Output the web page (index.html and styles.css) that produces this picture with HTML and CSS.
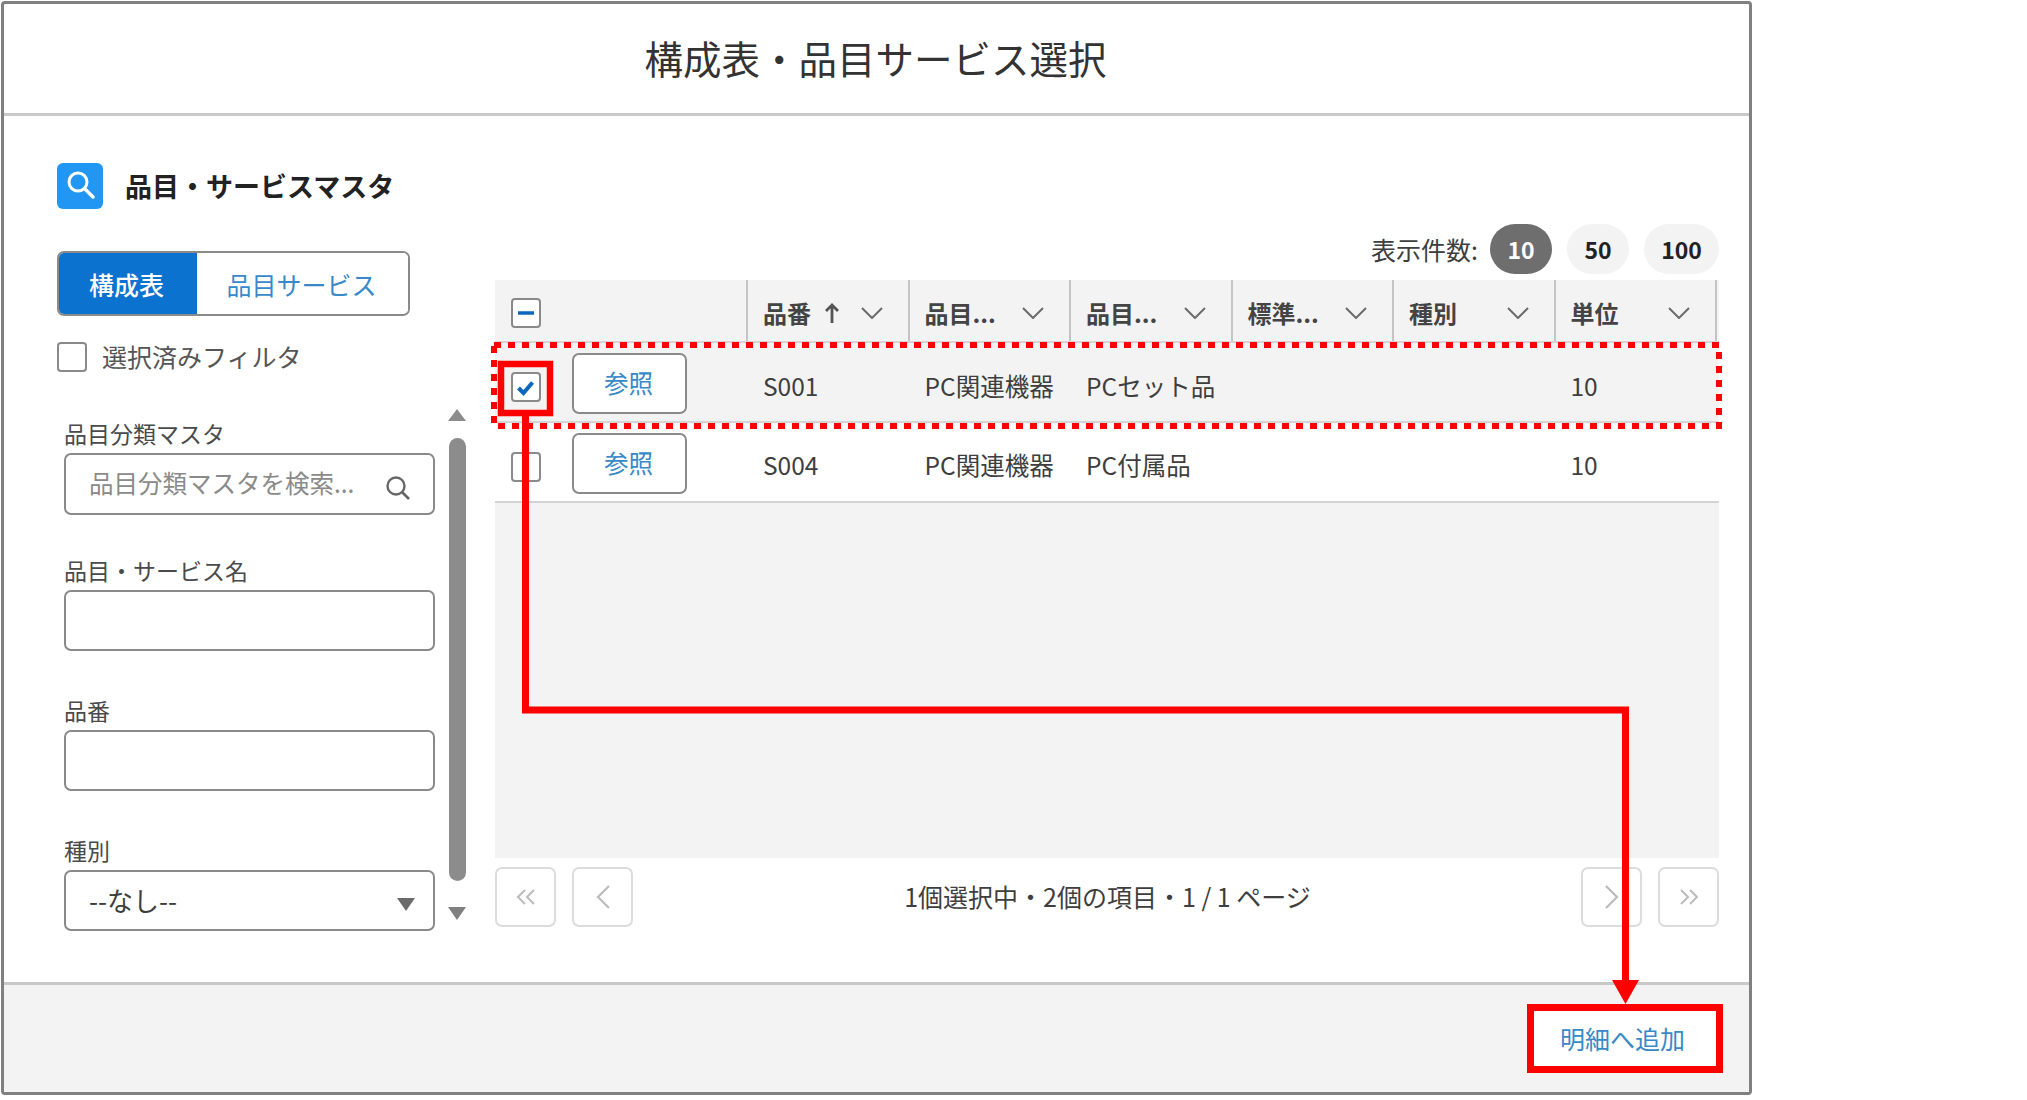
FILE: index.html
```html
<!DOCTYPE html>
<html lang="ja">
<head>
    <meta charset="UTF-8">
    <title>構成表・品目サービス選択</title>
    <link rel="stylesheet" href="styles.css">
</head>
<body>

<div class="page">
    <svg width="0" height="0" class="defs">
        <symbol id="chevron" viewBox="0 0 22 12">
            <path d="M1 1 L11 11 L21 1" fill="none" stroke="#6b6b6b" stroke-width="2"/>
        </symbol>
    </svg>

    <div class="dialog">
        <!-- Header -->
        <header class="dialog-head">
            <h1 class="dialog-title">構成表・品目サービス選択</h1>
        </header>

        <div class="dialog-main">
            <!-- Left filters -->
            <section class="filters">
                <div class="filters-title">
                    <span class="title-icon">
                        <svg width="46" height="46" viewBox="0 0 46 46">
                            <circle cx="21" cy="19" r="9" fill="none" stroke="#fff" stroke-width="3"/>
                            <path d="M28 26 L36 34" stroke="#fff" stroke-width="3.5" stroke-linecap="round"/>
                        </svg>
                    </span>
                    <h2 class="filters-heading">品目・サービスマスタ</h2>
                </div>

                <div class="toggle">
                    <button class="toggle-btn active">構成表</button>
                    <button class="toggle-btn">品目サービス</button>
                </div>

                <label class="check-row">
                    <span class="checkbox"></span>
                    <span class="check-text">選択済みフィルタ</span>
                </label>

                <div class="scroll-row">
                    <div class="fields">
                        <div class="field field-first">
                            <div class="field-label">品目分類マスタ</div>
                            <div class="input input-tall">
                                <span class="placeholder">品目分類マスタを検索...</span>
                                <svg width="26" height="26" viewBox="0 0 26 26">
                                    <circle cx="11" cy="11" r="8.5" fill="none" stroke="#666" stroke-width="2.4"/>
                                    <path d="M17 17 L24 24" stroke="#666" stroke-width="2.6"/>
                                </svg>
                            </div>
                        </div>
                        <div class="field">
                            <div class="field-label">品目・サービス名</div>
                            <div class="input"></div>
                        </div>
                        <div class="field">
                            <div class="field-label">品番</div>
                            <div class="input"></div>
                        </div>
                        <div class="field">
                            <div class="field-label">種別</div>
                            <div class="input select">
                                <span class="select-value">--なし--</span>
                                <span class="arrow-down"></span>
                            </div>
                        </div>
                    </div>
                    <div class="scrollbar">
                        <span class="arrow-up"></span>
                        <span class="thumb"></span>
                        <span class="arrow-down"></span>
                    </div>
                </div>
            </section>

            <!-- Right table -->
            <section class="results">
                <div class="page-size">
                    <span class="page-size-label">表示件数:</span>
                    <span class="pill pill-on">10</span>
                    <span class="pill">50</span>
                    <span class="pill pill-wide">100</span>
                </div>

                <div class="table">
                    <div class="row row-head">
                        <div class="cell cell-check">
                            <span class="checkbox checkbox-small">
                                <svg width="26" height="26" viewBox="0 0 26 26"><path d="M5 13 H21" stroke="#0b66bd" stroke-width="3.5"/></svg>
                            </span>
                        </div>
                        <div class="cell">品番
                            <svg class="sort-arrow" width="14" height="20" viewBox="0 0 14 20"><path d="M7 20 V2 M1 8 L7 2 L13 8" fill="none" stroke="#555" stroke-width="2.8"/></svg>
                            <svg class="chevron" width="22" height="12"><use href="#chevron"/></svg>
                        </div>
                        <div class="cell">品目...<svg class="chevron" width="22" height="12"><use href="#chevron"/></svg></div>
                        <div class="cell">品目...<svg class="chevron" width="22" height="12"><use href="#chevron"/></svg></div>
                        <div class="cell">標準...<svg class="chevron" width="22" height="12"><use href="#chevron"/></svg></div>
                        <div class="cell">種別<svg class="chevron" width="22" height="12"><use href="#chevron"/></svg></div>
                        <div class="cell">単位<svg class="chevron" width="22" height="12"><use href="#chevron"/></svg></div>
                    </div>

                    <div class="row row-selected">
                        <div class="cell cell-check">
                            <span class="checkbox checkbox-small">
                                <svg width="26" height="26" viewBox="0 0 26 26"><path d="M5.5 14 L10.5 19 L19.5 8.5" fill="none" stroke="#0b66bd" stroke-width="4"/></svg>
                            </span>
                            <button class="ref-btn">参照</button>
                        </div>
                        <div class="cell">S001</div>
                        <div class="cell">PC関連機器</div>
                        <div class="cell">PCセット品</div>
                        <div class="cell"></div>
                        <div class="cell"></div>
                        <div class="cell">10</div>
                    </div>

                    <div class="row">
                        <div class="cell cell-check">
                            <span class="checkbox checkbox-small"></span>
                            <button class="ref-btn">参照</button>
                        </div>
                        <div class="cell">S004</div>
                        <div class="cell">PC関連機器</div>
                        <div class="cell">PC付属品</div>
                        <div class="cell"></div>
                        <div class="cell"></div>
                        <div class="cell">10</div>
                    </div>
                </div>

                <div class="pager">
                    <span class="pager-btn">
                        <svg width="20" height="16" viewBox="0 0 20 16"><path d="M9 1 L2 8 L9 15 M18 1 L11 8 L18 15" fill="none" stroke="#bbb" stroke-width="2"/></svg>
                    </span>
                    <span class="pager-btn">
                        <svg width="14" height="24" viewBox="0 0 14 24"><path d="M13 1 L2 12 L13 23" fill="none" stroke="#bbb" stroke-width="2.2"/></svg>
                    </span>
                    <span class="pager-info">1個選択中・2個の項目・1 / 1 ページ</span>
                    <span class="pager-btn">
                        <svg width="14" height="24" viewBox="0 0 14 24"><path d="M1 1 L12 12 L1 23" fill="none" stroke="#bbb" stroke-width="2.2"/></svg>
                    </span>
                    <span class="pager-btn">
                        <svg width="20" height="16" viewBox="0 0 20 16"><path d="M2 1 L9 8 L2 15 M11 1 L18 8 L11 15" fill="none" stroke="#bbb" stroke-width="2"/></svg>
                    </span>
                </div>
            </section>
        </div>

        <!-- Footer -->
        <footer class="dialog-foot">
            <button class="add-btn">明細へ追加</button>
        </footer>
    </div>

    <!-- Red annotations over the screenshot -->
    <svg class="marks" width="2027" height="1100" viewBox="0 0 2027 1100">
        <rect x="494" y="345" width="1225" height="81" fill="none" stroke="#ff0000" stroke-width="6" stroke-dasharray="7 7"/>
        <rect x="501" y="364" width="49" height="49" fill="none" stroke="#ff0000" stroke-width="6.5"/>
        <path d="M525.5 416 V710 H1625.5 V985" fill="none" stroke="#ff0000" stroke-width="7"/>
        <polygon points="1612,980 1639,980 1625.5,1004" fill="#ff0000"/>
        <rect x="1530.5" y="1007.5" width="189" height="62" fill="none" stroke="#ff0000" stroke-width="7"/>
    </svg>
</div>

</body>
</html>
```

FILE: styles.css
```css
/* General styling */
body {
    margin: 0;
    background-color: #ffffff;
    color: #3e3e3e;
    font-family: "Noto Sans CJK JP", "Noto Sans", sans-serif;
    font-size: 24.5px;
    line-height: 30px;
}

button {
    font-family: inherit;
    cursor: pointer;
}

.page {
    position: relative;
    width: 2027px;
    height: 1100px;
    overflow: hidden;
}

.defs {
    position: absolute;
}

.marks {
    position: absolute;
    left: 0;
    top: 0;
    pointer-events: none;
}

/* Dialog frame */
.dialog {
    box-sizing: border-box;
    width: 1751px;
    height: 1094px;
    margin: 1px 0 0 1px;
    border: 3px solid #808080;
    border-radius: 4px;
    display: flex;
    flex-direction: column;
}

.dialog-head {
    height: 109px;
    border-bottom: 3px solid #c9c9c9;
    display: flex;
    align-items: center;
    justify-content: center;
}

.dialog-title {
    margin: -3px 2px 0 0;
    font-size: 38.5px;
    line-height: 50px;
    font-weight: 400;
    color: #333;
}

.dialog-main {
    flex: 1;
    display: flex;
    gap: 29px;
    padding: 47px 30px 0 53px;
}

.dialog-foot {
    height: 107px;
    border-top: 3px solid #c9c9c9;
    background: #f3f3f3;
    display: flex;
    align-items: center;
    justify-content: flex-end;
    padding-right: 33px;
}

.add-btn {
    width: 182px;
    height: 55px;
    border: 0;
    background: #fff;
    color: #3889c8;
    font-size: 25px;
    padding: 0 5px 2px 0;
}

/* Left filters */
.filters {
    width: 409px;
}

.filters-title {
    display: flex;
    align-items: center;
    gap: 22px;
}

.title-icon {
    width: 46px;
    height: 46px;
    border-radius: 6px;
    background: #2196f3;
}

.filters-heading {
    margin: 0;
    font-size: 27px;
    font-weight: 700;
    color: #222;
}

.toggle {
    box-sizing: border-box;
    width: 353px;
    height: 65px;
    margin-top: 42px;
    border: 2px solid #8a8a8a;
    border-radius: 7px;
    overflow: hidden;
    display: flex;
}

.toggle-btn {
    flex: 1;
    border: 0;
    background: #fff;
    color: #3889c8;
    font-size: 25px;
    padding: 0 2px 0 0;
}

.toggle-btn.active {
    flex: 0 0 138px;
    background: #0b72cf;
    color: #fff;
    font-weight: 500;
    padding-right: 3px;
}

.check-row {
    display: flex;
    align-items: center;
    gap: 15px;
    margin-top: 26px;
    font-size: 25px;
    color: #555;
}

.check-text {
    margin-top: -2px;
}

.checkbox {
    box-sizing: border-box;
    flex: none;
    width: 30px;
    height: 30px;
    border: 2px solid #8a8a8a;
    border-radius: 4px;
    background: #fff;
    display: block;
}

.scroll-row {
    display: flex;
    gap: 13px;
    margin-top: 36px;
    height: 520px;
}

.fields {
    width: 371px;
    margin-left: 7px;
    padding-top: 12px;
}

.field {
    margin-bottom: 46px;
}

.field-first {
    margin-bottom: 42px;
}

.field-label {
    height: 30px;
    margin-top: -2px;
    margin-bottom: 5px;
    font-size: 23px;
    color: #4a4a4a;
}

.input {
    box-sizing: border-box;
    height: 61px;
    border: 2px solid #8a8a8a;
    border-radius: 7px;
    background: #fff;
    display: flex;
    align-items: center;
    justify-content: space-between;
    padding: 0 22px;
}

.input-tall {
    height: 62px;
}

.input-tall svg {
    margin-top: 7px;
}

.placeholder {
    color: #8a8a8a;
    font-size: 24.5px;
    margin-top: -3px;
    margin-left: 1px;
}

.select {
    padding-right: 18px;
}

.select-value {
    font-size: 26px;
    margin-top: -2px;
    margin-left: 1px;
}

.select .arrow-down {
    border-top-color: #6b6b6b;
    margin-top: 7px;
}

/* Scrollbar */
.scrollbar {
    width: 18px;
    display: flex;
    flex-direction: column;
    align-items: center;
}

.thumb {
    width: 17px;
    height: 443px;
    margin: 17px 0 26px;
    border-radius: 9px;
    background: #8c8c8c;
}

.arrow-up,
.arrow-down {
    width: 0;
    height: 0;
    border-left: 9px solid transparent;
    border-right: 9px solid transparent;
}

.arrow-up {
    border-bottom: 12px solid #8c8c8c;
    margin-top: 1px;
}

.arrow-down {
    border-top: 13px solid #808080;
}

/* Results */
.results {
    flex: 1;
    margin-top: 61px;
}

.page-size {
    height: 50px;
    display: flex;
    align-items: center;
    justify-content: flex-end;
    gap: 15px;
}

.page-size-label {
    margin-right: -3px;
    font-size: 25px;
}

.pill {
    width: 62px;
    height: 50px;
    border-radius: 25px;
    background: #f3f3f3;
    color: #222;
    font-size: 23px;
    font-weight: 700;
    display: flex;
    align-items: center;
    justify-content: center;
}

.pill-on {
    background: #6e6e6e;
    color: #fff;
}

.pill-wide {
    width: 75px;
}

.table {
    height: 578px;
    margin-top: 6px;
    background: #f3f3f3;
}

.row {
    box-sizing: border-box;
    height: 80px;
    display: grid;
    grid-template-columns: 253px repeat(6, 161.5px);
    background: #fff;
    border-bottom: 2px solid #d4d4d4;
}

.row-head {
    height: 63px;
    background: #f3f3f3;
    font-weight: 700;
    font-size: 24px;
    color: #444;
}

.row-head .cell {
    border-right: 2px solid #c4c4c4;
}

.row-selected {
    background: #f3f3f3;
}

.cell {
    box-sizing: border-box;
    min-width: 0;
    padding-left: 15px;
    padding-top: 5px;
    display: flex;
    align-items: center;
    white-space: nowrap;
}

.row-selected .cell {
    padding-top: 8px;
}

.row .cell-check {
    padding-left: 16px;
    padding-top: 10px;
    gap: 31px;
}

.row-head .cell-check {
    padding-top: 5px;
}

.chevron {
    margin-left: auto;
    margin-right: 25px;
    flex: none;
}

.sort-arrow {
    margin-left: 14px;
}

.checkbox-small {
    height: 30px;
}

.checkbox-small svg {
    display: block;
}

.ref-btn {
    box-sizing: border-box;
    width: 115px;
    height: 61px;
    margin-top: -8px;
    border: 2px solid #8a8a8a;
    border-radius: 7px;
    background: #fff;
    color: #3889c8;
    font-size: 24.5px;
    padding: 0 2px 1px 0;
}

/* Pager */
.pager {
    margin-top: 9px;
    display: flex;
    align-items: center;
    gap: 16px;
}

.pager-btn {
    box-sizing: border-box;
    flex: none;
    width: 61px;
    height: 60px;
    border: 2px solid #dcdcdc;
    border-radius: 7px;
    display: flex;
    align-items: center;
    justify-content: center;
}

.pager-info {
    flex: 1;
    text-align: center;
    font-size: 25px;
    padding-left: 1px;
    margin-top: -2px;
}
```
